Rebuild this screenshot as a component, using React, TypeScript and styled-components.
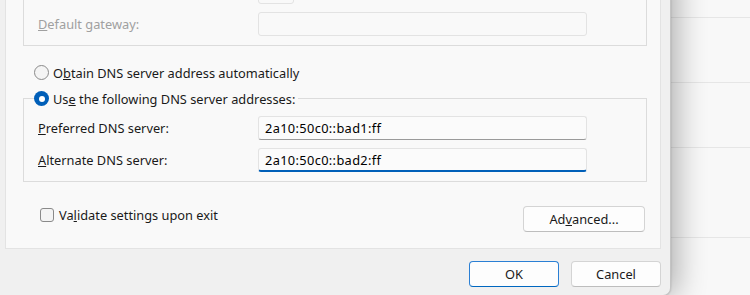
import React from 'react';
import styled, { createGlobalStyle, css } from 'styled-components';

const GlobalStyle = createGlobalStyle`
    html, body {
        margin: 0;
        padding: 0;
    }
    body {
        background: #f8f8f8;
        font-family: "Noto Sans", "Segoe UI", sans-serif;
        font-size: 12.8px;
        color: #1a1a1a;
    }
    * {
        box-sizing: border-box;
    }
`;

type BoxState = 'disabled' | 'normal' | 'focused';

interface IField {
    label?: React.ReactNode;
    value?: string;
    state: BoxState;
    width?: number;
}

const ipFields: IField[] = [
    { state: 'disabled', width: 36 },
    { label: <><u>D</u>efault gateway:</>, state: 'disabled' },
];

const dnsFields: IField[] = [
    { label: <><u>P</u>referred DNS server:</>, value: '2a10:50c0::bad1:ff', state: 'normal' },
    { label: <><u>A</u>lternate DNS server:</>, value: '2a10:50c0::bad2:ff', state: 'focused' },
];

const backRows = [18, 65, 65, 90];

const FieldList = (p: { fields: IField[] }) => (
    <>
        {p.fields.map((f, i) => (
            <FieldRow key={i}>
                <FieldLabel $disabled={f.state === 'disabled'}>{f.label}</FieldLabel>
                <TextBox $state={f.state} $width={f.width}>{f.value}</TextBox>
            </FieldRow>
        ))}
    </>
);

export default function App() {
    return (
        <>
            <GlobalStyle />
            <Desktop>
                <Dialog>
                    <TabPage>
                        <GroupBox $cut>
                            <FieldList fields={ipFields} />
                        </GroupBox>

                        <RadioRow $top={18}>
                            <Radio />
                            <span>O<u>b</u>tain DNS server address automatically</span>
                        </RadioRow>

                        <GroupBox>
                            <Legend>
                                <Radio $checked />
                                <span>Us<u>e</u> the following DNS server addresses:</span>
                            </Legend>
                            <FieldList fields={dnsFields} />
                        </GroupBox>

                        <Footer>
                            <CheckRow>
                                <CheckBox />
                                <span>Va<u>l</u>idate settings upon exit</span>
                            </CheckRow>
                            <Button $width={122}>Ad<u>v</u>anced...</Button>
                        </Footer>
                    </TabPage>

                    <ButtonRow>
                        <Button $default>OK</Button>
                        <Button>Cancel</Button>
                    </ButtonRow>
                </Dialog>

                <BackWindow>
                    {backRows.map((h, i) => (
                        <BackRow key={i} style={{ height: h }} />
                    ))}
                </BackWindow>
            </Desktop>
        </>
    );
}

const Desktop = styled.div`
    width: 750px;
    height: 295px;
    overflow: hidden;
    display: flex;
    align-items: flex-end;
    background: #f8f8f8;
`;

const Dialog = styled.div`
    position: relative;
    z-index: 1;
    flex: none;
    width: 671px;
    margin-bottom: -1px;
    display: flex;
    flex-direction: column;
    padding: 0 9px 8px 5px;
    background: #f0f0f0;
    border-right: 1px solid #c4c4c4;
    border-bottom: 1px solid #c4c4c4;
    border-bottom-right-radius: 8px;
    box-shadow: 6px 0 30px rgba(0, 0, 0, 0.3), 0 0 2px rgba(0, 0, 0, 0.18);
`;

const TabPage = styled.div`
    display: flex;
    flex-direction: column;
    background: #f9f9f9;
    border: 1px solid #e3e3e3;
    border-top: none;
    padding: 0 13px 16px 17px;
`;

const RadioRow = styled.div<{ $top?: number }>`
    display: flex;
    align-items: center;
    gap: 4px;
    height: 17px;
    padding-left: 11px;
    margin-top: ${(p) => p.$top ?? 0}px;
    white-space: nowrap;
`;

const Radio = styled.span<{ $checked?: boolean }>`
    flex: none;
    width: 15px;
    height: 15px;
    border-radius: 50%;
    ${(p) =>
        p.$checked
            ? css`
                  background: #005fb8;
                  display: flex;
                  align-items: center;
                  justify-content: center;
                  &::after {
                      content: '';
                      width: 6px;
                      height: 6px;
                      border-radius: 50%;
                      background: #fff;
                  }
              `
            : css`
                  background: #f4f4f4;
                  border: 1px solid #8a8a8a;
              `}
`;

const GroupBox = styled.fieldset<{ $cut?: boolean }>`
    margin: ${(p) => (p.$cut ? 0 : 9)}px 0 0 0;
    min-width: 0;
    border: 1px solid #dcdcdc;
    ${(p) =>
        p.$cut &&
        css`
            border-top: none;
        `}
    padding: 9px 58px 9px 14px;
    display: flex;
    flex-direction: column;
    gap: 8px;
`;

const Legend = styled.legend`
    display: flex;
    align-items: center;
    gap: 4px;
    height: 17px;
    padding: 0 3px 0 0;
    margin-left: -4px;
    white-space: nowrap;
`;

const FieldRow = styled.div`
    display: flex;
    align-items: center;
    height: 24px;
`;

const FieldLabel = styled.label<{ $disabled?: boolean }>`
    flex: none;
    width: 220px;
    color: ${(p) => (p.$disabled ? '#a0a0a0' : '#1a1a1a')};
    white-space: nowrap;
`;

const TextBox = styled.div<{ $state: BoxState; $width?: number }>`
    flex: none;
    width: ${(p) => p.$width ?? 329}px;
    height: 24px;
    padding: 0 6px;
    display: flex;
    align-items: center;
    color: #000;
    letter-spacing: 0.35px;
    border-radius: 3px;
    border: 1px solid #e3e3e3;
    background: ${(p) => (p.$state === 'disabled' ? '#f9f9f9' : '#fbfbfb')};
    ${(p) =>
        p.$state === 'normal' &&
        css`
            border-bottom-color: #9a9a9a;
        `}
    ${(p) =>
        p.$state === 'focused' &&
        css`
            border-bottom: 2px solid #005fb8;
            padding-top: 1px;
        `}
`;

const Footer = styled.div`
    margin-top: 24px;
    display: flex;
    justify-content: space-between;
    align-items: flex-start;
    padding: 0 2px 0 17px;
`;

const CheckRow = styled.div`
    display: flex;
    align-items: center;
    gap: 5px;
    height: 17px;
    white-space: nowrap;
`;

const CheckBox = styled.span`
    flex: none;
    width: 14px;
    height: 14px;
    border-radius: 3px;
    border: 1px solid #8a8a8a;
    background: #f4f4f4;
`;

const Button = styled.button<{ $width?: number; $default?: boolean }>`
    width: ${(p) => p.$width ?? 90}px;
    height: 26px;
    padding: 0;
    font: inherit;
    color: #1a1a1a;
    background: #fdfdfd;
    border-radius: 4px;
    border: 1px solid ${(p) => (p.$default ? '#2a7fd4' : '#d4d4d4')};
    border-bottom-color: ${(p) => (p.$default ? '#0067c0' : '#bdbdbd')};
`;

const ButtonRow = styled.div`
    margin-top: 12px;
    display: flex;
    justify-content: flex-end;
    gap: 12px;
`;

const BackWindow = styled.div`
    align-self: stretch;
    flex: 1;
    display: flex;
    flex-direction: column;
    background: #f8f8f8;
`;

const BackRow = styled.div`
    flex: none;
    border-bottom: 1px solid #e6e6e6;
`;
